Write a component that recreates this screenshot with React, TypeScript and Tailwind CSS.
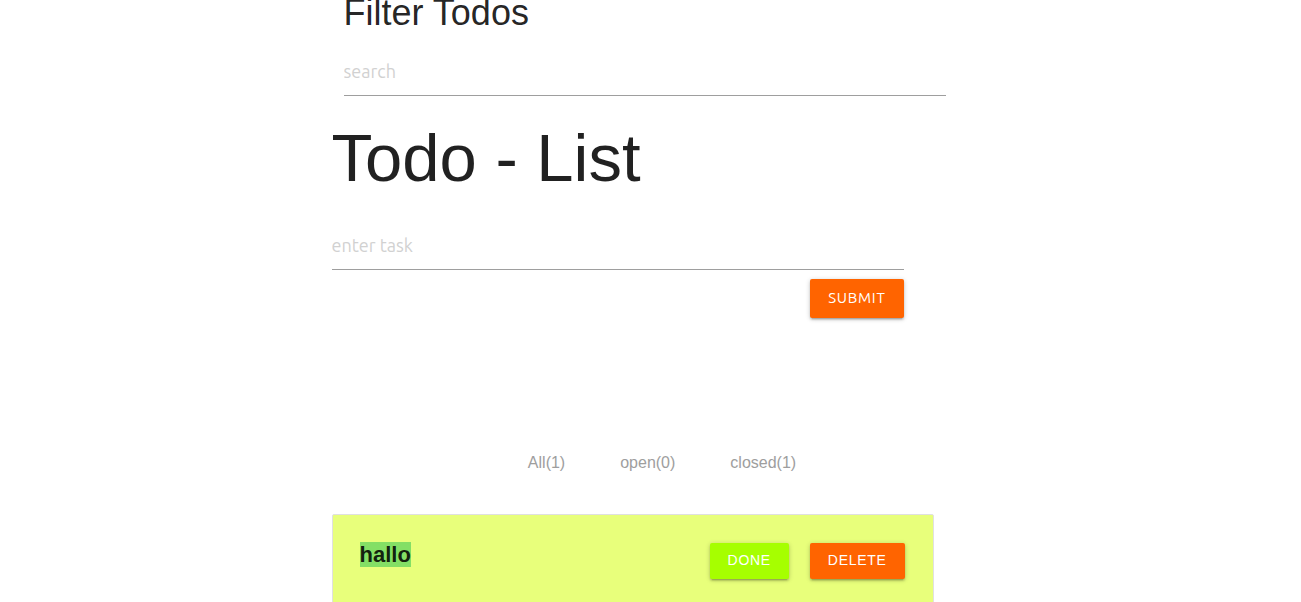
import { useState } from "react";

const filters = ["All(1)", "open(0)", "closed(1)"];

const raised =
  "rounded-xs tracking-wider text-white shadow-[0_2px_2px_0_rgba(0,0,0,0.14),0_3px_1px_-2px_rgba(0,0,0,0.12),0_1px_5px_0_rgba(0,0,0,0.2)]";

const field =
  "block h-12 w-full border-b border-[#9e9e9e] bg-transparent pb-0.5 font-['Ubuntu','Noto_Sans',sans-serif] text-[18px] outline-none placeholder:text-[#d1d1d1]";

export default function App() {
  const [search, setSearch] = useState("");
  const [task, setTask] = useState("");

  return (
    <div className="min-h-screen overflow-hidden bg-white font-['Liberation_Sans',Arial,sans-serif] text-black/87">
      <main className="mx-auto w-full max-w-[638px]">
        <section className="max-w-[626px] px-3">
          <h4 className="-mt-3 text-[36px] leading-[50px]">Filter Todos</h4>
          <input
            type="text"
            aria-label="search"
            placeholder="search"
            value={search}
            onChange={(e) => setSearch(e.target.value)}
            className={`mt-[10px] ${field}`}
          />
        </section>
        <h1 className="mt-[25px] text-[67px] leading-[74px]">Todo - List</h1>
        <form className="mt-[27px] max-w-[572px]" onSubmit={(e) => e.preventDefault()}>
          <input
            type="text"
            aria-label="enter task"
            placeholder="enter task"
            value={task}
            onChange={(e) => setTask(e.target.value)}
            className={field}
          />
          <div className="mt-[9px] flex justify-end">
            <button
              type="submit"
              className={`h-[39px] bg-[#ff6400] px-[18px] font-['Ubuntu','Noto_Sans',sans-serif] text-[15px] ${raised}`}
            >
              SUBMIT
            </button>
          </div>
        </form>
        <nav className="mt-[133px] flex max-w-[602px] justify-center gap-[55px] pl-[59px] text-base text-[#9e9e9e]">
          {filters.map((label) => (
            <a key={label} href="#">
              {label}
            </a>
          ))}
        </nav>
        <article className="mt-[39px] flex max-w-[602px] items-start justify-between rounded-xs border border-[#e0e0e0] bg-[#e8ff7b] px-7 pt-7 pb-10">
          <h5 className="-ml-px text-[22px] leading-6 font-bold">
            <span className="bg-[#84df65]">hallo</span>
          </h5>
          <div className="flex gap-[21px]">
            <button type="button" className={`h-9 bg-[#a6ff00] px-[18px] pb-0.5 text-sm ${raised}`}>
              DONE
            </button>
            <button type="button" className={`h-9 bg-[#ff6400] px-[18px] pb-0.5 text-sm ${raised}`}>
              DELETE
            </button>
          </div>
        </article>
      </main>
    </div>
  );
}
